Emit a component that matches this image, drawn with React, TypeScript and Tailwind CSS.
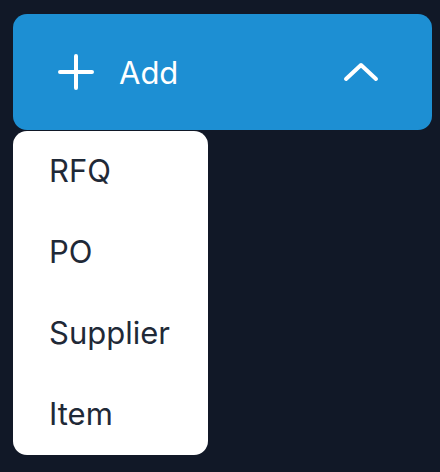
import { useState } from 'react';

const ITEMS = ['RFQ', 'PO', 'Supplier', 'Item'];

export default function App() {
  const [open, setOpen] = useState(true);
  return (
    <div className="min-h-screen bg-[#111827] pt-[14px] pl-[13px]" style={{ fontFamily: 'Inter, "Noto Sans", sans-serif' }}>
      <div className="relative w-[419px]">
        {/* Trigger */}
        <button
          onClick={() => setOpen(!open)}
          className="w-full h-[116px] rounded-[14px] bg-[#1d8fd3] text-white flex items-center pl-[45px] pr-[53px]"
        >
          <svg width="36" height="36" viewBox="0 0 36 36" fill="none" stroke="white" strokeWidth="4" strokeLinecap="round">
            <path d="M18 2v32M2 18h32" />
          </svg>
          <span className="ml-[25px] text-[31px] leading-none">Add</span>
          <svg className="ml-auto" width="36" height="22" viewBox="0 0 36 22" fill="none" stroke="white" strokeWidth="4" strokeLinecap="round" strokeLinejoin="round">
            <path d={open ? 'M3 18L18 4l15 14' : 'M3 4l15 14L33 4'} />
          </svg>
        </button>
        {/* Menu */}
        {open && (
          <div className="absolute left-0 top-[117px] w-[195px] rounded-[14px] bg-white">
            {ITEMS.map(item => (
              <div key={item} className="h-[81px] flex items-center pl-[36px] text-[31px] text-[#1f2937]">
                {item}
              </div>
            ))}
          </div>
        )}
      </div>
    </div>
  );
}
